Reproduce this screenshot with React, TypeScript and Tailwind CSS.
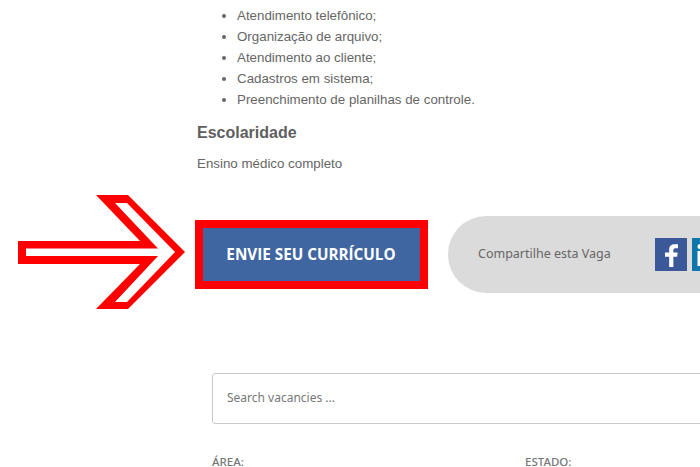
export default function App() {
  const items = [
    "Atendimento telefônico;",
    "Organização de arquivo;",
    "Atendimento ao cliente;",
    "Cadastros em sistema;",
    "Preenchimento de planilhas de controle.",
  ];
  return (
    <div className="w-[700px] h-[467px] overflow-hidden bg-white font-['Liberation_Sans',sans-serif] flex flex-col">
      <div className="pl-[197px] pt-[5px] text-[#666666]">
        <ul className="list-disc pl-[40px] text-[13.33px] leading-[21px] marker:text-[#666666]">
          {items.map((t) => (
            <li key={t}>{t}</li>
          ))}
        </ul>
        <h3 className="mt-[11px] text-[16px] leading-[24px] font-bold text-[#5f5f5f]">Escolaridade</h3>
        <p className="mt-[10px] text-[13.33px] leading-[18px]">Ensino médico completo</p>
      </div>

      <div className="mt-[24px] flex items-center pl-[18px] h-[115px] shrink-0">
        <svg width="167" height="115" viewBox="18 195 167 115" className="shrink-0 mb-[4px]">
          <polygon points="18,241 140,241 96,195 128,195 185,252 128,309 96,309 140,264 18,264" fill="#fe0000" />
          <polygon points="26,248.5 158,248.5 115,203 127,203 175,252 127,302 115,302 158,256 26,256" fill="#ffffff" />
        </svg>
        <div className="ml-[10px] w-[233px] h-[69px] shrink-0 border-[8px] border-[#fe0000] bg-[#3f66a0] flex items-center justify-center">
          <span className="font-['Open_Sans',sans-serif] text-[15.25px] font-bold text-white -ml-[1px]">ENVIE SEU CURRÍCULO</span>
        </div>
        <div className="ml-[20px] h-[77px] w-[300px] shrink-0 rounded-l-[38px] bg-[#dbdbdb] flex items-center pl-[30px]">
          <span className="font-['Noto_Sans',sans-serif] text-[12.5px] text-[#666666] w-[177px] shrink-0">Compartilhe esta Vaga</span>
          <div className="flex gap-[5px]">
            <div className="w-[32px] h-[33px] bg-[#3b5998] flex items-center justify-center">
              <svg width="13" height="23" viewBox="0 0 14 27" fill="#ffffff" preserveAspectRatio="none" className="mt-[1px]">
                <path d="M9 27V15h4l.7-5H9V7.600C9 6 9.500 5 11.500 5H14V.6C13.400.5 12 .4 10.500.4 7 .4 4.500 2.500 4.500 6.600V10H0v5h4.500v12z" />
              </svg>
            </div>
            <div className="w-[32px] h-[33px] bg-[#0e76a8] flex items-start pl-[5px] pt-[6px]">
              <svg width="6" height="22" viewBox="0 0 6 22" fill="#ffffff" className="shrink-0">
                <circle cx="3" cy="2.500" r="2.500" />
                <rect x="0.500" y="7" width="5" height="15" />
              </svg>
            </div>
          </div>
        </div>
      </div>

      <div className="mt-[61px] ml-[212px] w-[520px] h-[51px] shrink-0 rounded-[3px] border border-[#c9c9c9] flex items-center pl-[14px] pb-[2px]">
        <span className="font-['Noto_Sans',sans-serif] text-[12px] text-[#777777]">Search vacancies ...</span>
      </div>

      <div className="mt-[31px] ml-[212px] flex font-['Noto_Sans',sans-serif] text-[11.5px] font-medium text-[#777777] leading-[14px]">
        <span className="w-[313px]">ÁREA:</span>
        <span>ESTADO:</span>
      </div>
    </div>
  );
}
